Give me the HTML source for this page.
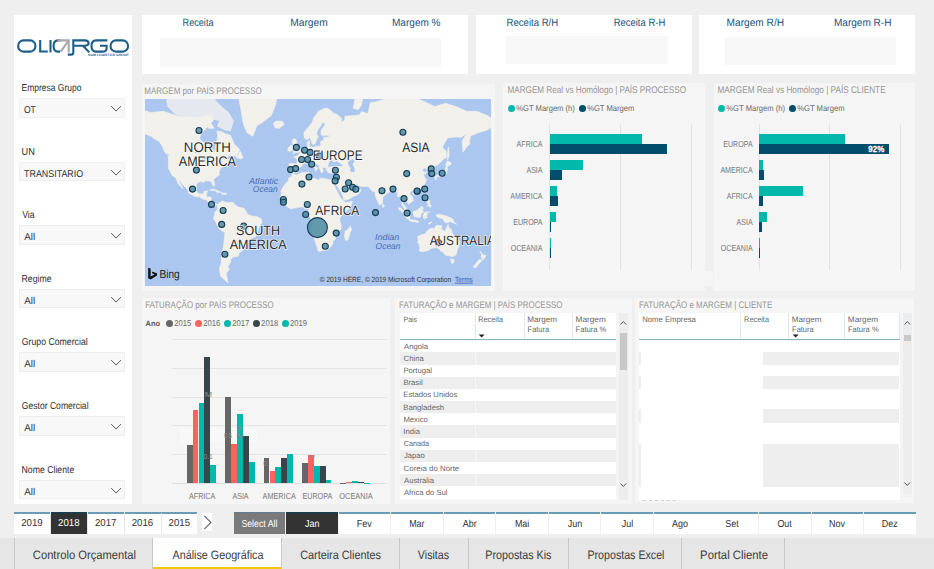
<!DOCTYPE html>
<html><head><meta charset="utf-8"><title>Análise Geográfica</title>
<style>
html,body{margin:0;padding:0}
body{width:934px;height:569px;overflow:hidden;position:relative;background:#efefef;font-family:"Liberation Sans", sans-serif;text-rendering:geometricPrecision}
.b{position:absolute}
.t{position:absolute;white-space:nowrap;line-height:1;transform-origin:0 0}
</style></head><body>
<div class="b" style="left:14.00px;top:15.00px;width:118.00px;height:489.00px;background:#fff;"></div>
<svg class="b" style="left:15px;top:36px" width="118" height="24" viewBox="15 36 118 24">
<g fill="none" stroke="#1d5f8b" stroke-width="2.1" stroke-linecap="butt">
<rect x="18.2" y="40.4" width="17.2" height="11.2" rx="5.2"/>
<path d="M40.2 40 V51.5 H47.8"/>
<path d="M50.5 40 V52.4"/>
<path d="M60.5 40.4 H58 Q53.6 40.4 53.6 46 Q53.6 51.6 58 51.6 H60"/>
<path d="M67.8 54.6 H71 Q73.3 54.6 73.3 52.4 V40.4 H84.5 Q88.6 40.4 88.6 43.3 Q88.6 45.7 84.5 45.7 H74 M83 45.7 L89.3 52.4"/>
<path d="M107.4 40.4 H96 Q91.5 40.4 91.5 46 Q91.5 51.6 96 51.6 H102.5 Q106.6 51.6 106.6 48.5 V45.7 H100"/>
<rect x="110.6" y="40.4" width="17.4" height="11.2" rx="5.2"/>
</g>
<g fill="none" stroke="#a9a9a9" stroke-width="2.1"><path d="M57.5 40.4 H68.7 V52.4 M68.4 40.8 L60.5 51.8"/></g>
<text x="88" y="56.3" font-size="3.4" fill="#1d5f8b" font-family="Liberation Sans" font-weight="bold" textLength="40.5" lengthAdjust="spacingAndGlyphs">SGM LOGISTICS GROUP</text>
</svg>
<div class="b" style="left:19.30px;top:98.00px;width:106.20px;height:19.60px;background:#f8f8f8;box-sizing:border-box;border:1px solid #eeeeee;"></div>
<svg class="b" style="left:110px;top:104.0px" width="13" height="9"><path d="M1.2 2.2 L6.1 7 L11 2.2" fill="none" stroke="#555" stroke-width="1"/></svg>
<div class="b" style="left:19.30px;top:161.60px;width:106.20px;height:19.60px;background:#f8f8f8;box-sizing:border-box;border:1px solid #eeeeee;"></div>
<svg class="b" style="left:110px;top:167.6px" width="13" height="9"><path d="M1.2 2.2 L6.1 7 L11 2.2" fill="none" stroke="#555" stroke-width="1"/></svg>
<div class="b" style="left:19.30px;top:225.20px;width:106.20px;height:19.60px;background:#f8f8f8;box-sizing:border-box;border:1px solid #eeeeee;"></div>
<svg class="b" style="left:110px;top:231.2px" width="13" height="9"><path d="M1.2 2.2 L6.1 7 L11 2.2" fill="none" stroke="#555" stroke-width="1"/></svg>
<div class="b" style="left:19.30px;top:288.80px;width:106.20px;height:19.60px;background:#f8f8f8;box-sizing:border-box;border:1px solid #eeeeee;"></div>
<svg class="b" style="left:110px;top:294.8px" width="13" height="9"><path d="M1.2 2.2 L6.1 7 L11 2.2" fill="none" stroke="#555" stroke-width="1"/></svg>
<div class="b" style="left:19.30px;top:352.40px;width:106.20px;height:19.60px;background:#f8f8f8;box-sizing:border-box;border:1px solid #eeeeee;"></div>
<svg class="b" style="left:110px;top:358.4px" width="13" height="9"><path d="M1.2 2.2 L6.1 7 L11 2.2" fill="none" stroke="#555" stroke-width="1"/></svg>
<div class="b" style="left:19.30px;top:416.00px;width:106.20px;height:19.60px;background:#f8f8f8;box-sizing:border-box;border:1px solid #eeeeee;"></div>
<svg class="b" style="left:110px;top:422.0px" width="13" height="9"><path d="M1.2 2.2 L6.1 7 L11 2.2" fill="none" stroke="#555" stroke-width="1"/></svg>
<div class="b" style="left:19.30px;top:479.60px;width:106.20px;height:19.60px;background:#f8f8f8;box-sizing:border-box;border:1px solid #eeeeee;"></div>
<svg class="b" style="left:110px;top:485.6px" width="13" height="9"><path d="M1.2 2.2 L6.1 7 L11 2.2" fill="none" stroke="#555" stroke-width="1"/></svg>
<div class="b" style="left:142.00px;top:15.00px;width:326.00px;height:59.00px;background:#fff;"></div>
<div class="b" style="left:160.00px;top:38.00px;width:281.00px;height:29.00px;background:#f8f8f8;"></div>
<div class="b" style="left:476.00px;top:15.00px;width:215.50px;height:59.00px;background:#fff;"></div>
<div class="b" style="left:506.00px;top:36.00px;width:162.00px;height:28.00px;background:#f8f8f8;"></div>
<div class="b" style="left:699.00px;top:15.00px;width:215.50px;height:59.00px;background:#fff;"></div>
<div class="b" style="left:725.00px;top:36.50px;width:171.00px;height:28.00px;background:#f8f8f8;"></div>
<div class="b" style="left:142.00px;top:84.00px;width:353.00px;height:207.00px;background:#f5f5f5;"></div>
<svg class="b" style="left:145px;top:99px" width="346" height="187" viewBox="0 0 346 187">
<rect width="346" height="187" fill="#abc7f0"/>
<path d="M22.5 -9.0L22.5 7.6L29.8 15.2L48.7 19.4L61.3 18.0L68.6 20.7L74.9 22.0L85.6 32.2L88.7 21.7L83.3 12.9L79.1 9.8L73.9 5.0L69.7 0.0L71.8 -9.0Z" fill="#e5e8ee"/><path d="M88.7 21.7L85.6 32.2L79.1 30.9L71.8 27.0L76.0 18.8L69.2 13.2L63.4 11.4L59.7 0.8L69.7 0.0L73.9 5.0L79.1 9.8L83.3 12.9Z" fill="#e5e8ee"/><path d="M29.8 15.2L35.1 16.6L42.4 15.8L47.7 13.8L46.6 4.3L42.4 0.8L35.1 0.8L29.8 4.3L28.8 9.2Z" fill="#e5e8ee"/><path d="M22.5 7.6L26.7 9.2L31.9 4.3L30.9 -4.9L23.5 -4.9L21.4 2.6Z" fill="#e5e8ee"/>
<g fill="#f2f0ea" stroke="#f2f0ea" stroke-width="0.6" stroke-linejoin="round"><path d="M-22.6 24.3L-20.5 15.5L-10.9 8.3L5.7 13.5L18.3 12.3L30.9 16.6L40.3 17.5L51.8 18.6L53.9 18.0L61.3 16.6L67.6 16.6L65.5 13.8L68.1 22.0L62.3 28.1L56.0 34.8L54.5 39.3L57.1 42.8L64.4 45.9L67.4 50.1L70.2 52.5L70.7 47.4L72.8 36.9L71.8 32.0L77.0 32.7L80.2 34.8L85.4 36.3L89.1 44.7L94.9 50.8L91.7 57.3L84.4 56.5L79.1 59.9L85.9 60.3L89.6 61.8L84.4 64.7L80.2 64.7L80.2 67.2L76.0 68.8L73.9 73.4L74.4 75.7L68.6 80.3L69.7 85.6L69.2 87.6L67.8 86.2L66.7 83.8L65.5 82.1L59.7 81.8L59.2 83.3L55.0 82.6L51.5 84.7L51.3 89.0L51.0 91.2L53.4 94.7L58.1 95.1L58.7 94.0L58.9 92.3L62.3 91.8L61.8 95.1L61.1 97.8L65.5 98.0L66.3 98.9L65.8 103.0L68.1 105.1L70.2 104.6L72.5 105.6L70.2 106.7L69.2 106.9L66.5 105.8L63.7 104.1L61.8 100.9L57.6 99.9L54.5 97.8L52.4 98.1L47.7 96.5L42.9 93.4L43.2 91.8L41.4 89.0L38.7 87.0L35.9 82.9L33.2 79.9L35.1 83.8L38.2 90.1L36.1 88.1L33.0 84.4L31.2 80.3L30.7 78.8L27.1 76.6L25.1 72.4L23.3 69.1L23.5 60.8L22.8 57.4L24.6 56.5L19.9 53.6L17.2 47.0L13.6 41.9L9.4 39.9L6.2 37.3L0.4 35.2L-5.3 38.5L-7.9 41.9L-12.1 42.2L-16.3 45.6L-19.0 47.4L-11.1 39.3L-16.3 37.9L-20.0 33.8L-19.3 30.2L-15.3 27.0L-20.3 26.7Z"/><path d="M107.4 37.3L102.2 33.8L99.1 27.0L97.5 20.7L95.9 10.8L93.3 -3.0L84.4 -11.2L77.0 -20.7L90.7 -42.1L111.6 -54.4L132.6 -42.1L134.7 -13.4L130.5 6.0L126.3 16.6L116.9 23.8L111.6 27.0L108.5 35.9Z"/><path d="M128.4 24.5L130.5 22.3L136.8 22.0L139.4 25.3L134.0 29.5L129.8 28.6Z"/><path d="M63.4 29.3L69.2 29.3L66.5 25.0L62.9 23.3Z"/><path d="M91.4 58.7L95.4 52.3L98.0 58.8L95.4 59.9Z"/><path d="M64.4 91.3L67.6 89.9L72.3 91.5L75.8 93.2L72.3 93.5L69.7 91.5L65.5 91.5Z"/><path d="M75.6 93.6L81.8 94.5L81.4 95.4L77.5 95.4Z"/><path d="M72.5 105.6L74.4 103.6L78.1 101.8L78.8 103.0L83.3 103.5L88.6 103.6L89.6 105.6L93.8 108.2L99.1 109.3L101.2 112.6L102.7 115.4L106.9 117.0L111.6 117.4L116.7 120.1L116.9 123.7L114.3 127.3L112.7 132.7L110.9 137.6L106.9 138.9L102.7 142.1L102.4 145.0L98.0 151.0L93.8 154.3L93.3 157.3L88.6 158.0L85.4 160.6L85.9 162.7L82.8 167.7L84.4 170.0L81.2 174.7L82.0 178.0L83.0 183.9L75.4 177.1L74.4 169.2L76.3 163.4L76.5 155.4L78.6 146.7L79.9 133.7L74.4 130.0L72.8 127.3L70.2 122.1L68.4 119.5L69.7 115.4L69.7 113.4L71.3 111.8L72.5 110.3L72.3 107.2Z"/><path d="M147.4 75.0L151.5 75.9L156.7 73.7L164.1 73.1L165.1 76.0L164.6 77.8L169.6 79.4L174.4 81.5L174.6 79.6L177.7 79.0L184.5 80.9L187.5 80.5L187.8 82.2L188.7 85.0L190.8 89.6L192.4 92.9L194.0 95.6L195.2 98.3L199.0 102.5L200.8 103.7L205.0 102.7L207.4 102.2L207.1 103.7L206.1 106.7L202.4 111.3L197.1 115.9L194.8 119.5L195.0 122.6L196.1 125.2L196.1 130.0L190.3 135.4L190.8 139.8L188.0 142.1L187.7 145.3L185.1 148.5L182.4 151.0L177.2 151.6L174.6 152.6L172.9 151.8L172.5 149.1L170.9 145.1L168.8 138.1L166.0 132.1L167.9 126.3L166.4 120.6L163.0 115.4L163.6 110.5L162.5 109.8L159.9 110.0L158.3 107.9L154.6 108.2L149.4 109.1L145.7 109.9L141.5 107.3L139.6 105.1L137.9 103.0L136.0 101.5L135.2 99.1L136.5 94.0L135.8 92.3L137.9 88.4L140.0 85.0L143.3 82.1L143.6 79.1L146.5 77.2Z"/><path d="M205.3 126.8L206.6 130.5L205.5 132.7L203.0 140.7L200.8 141.5L199.4 138.1L200.2 132.1L202.4 130.8L204.5 128.4Z"/><path d="M147.7 74.7L146.8 73.6L145.7 73.2L144.2 73.4L144.4 71.2L143.6 70.2L144.4 66.8L143.8 65.1L145.2 64.4L149.4 64.8L151.7 64.8L152.3 60.8L151.0 59.1L148.7 58.1L152.0 57.0L153.6 55.7L155.3 53.6L157.8 52.5L158.6 50.0L160.9 49.1L162.6 48.4L162.1 45.6L162.2 43.2L164.7 41.5L164.4 44.1L163.9 46.5L165.0 47.7L166.2 47.9L168.5 48.4L171.4 47.0L174.2 47.5L175.8 45.9L175.6 42.8L177.3 41.5L179.2 42.2L178.3 38.7L183.0 37.9L185.4 37.1L184.0 36.5L180.3 36.3L177.5 37.1L176.0 35.2L176.3 30.9L180.1 25.8L179.3 23.8L177.1 23.8L175.8 27.0L173.5 29.8L172.0 32.7L171.7 35.5L173.3 37.5L171.0 42.0L170.3 44.5L168.6 45.6L167.0 44.7L166.0 40.9L164.8 38.3L162.2 40.7L159.5 39.3L158.8 33.8L160.9 30.7L164.6 27.0L167.2 23.3L168.8 18.6L171.4 15.2L173.5 12.3L178.3 9.8L182.4 8.9L186.1 11.7L188.7 14.4L191.9 15.2L196.6 19.4L196.1 23.3L199.8 21.2L200.0 17.2L209.2 16.6L214.4 15.8L216.5 12.6L222.8 14.6L225.5 3.3L229.1 3.3L237.5 0.8L244.9 -1.1L258.5 -13.4L271.1 -1.1L290.0 7.6L300.5 4.3L311.0 7.6L321.4 12.3L331.9 12.3L342.4 16.6L352.9 23.3L348.7 27.0L341.4 31.6L335.1 33.1L325.6 36.9L324.6 41.9L325.1 44.7L321.4 48.3L318.0 53.3L317.2 41.9L321.4 34.8L316.2 38.3L311.0 37.9L302.6 38.9L297.3 48.3L301.0 51.7L301.7 58.1L298.4 60.3L293.1 65.7L290.7 66.4L289.4 68.2L289.4 74.1L289.2 75.7L286.3 76.7L286.1 73.4L284.5 69.8L281.1 71.0L280.7 68.3L277.4 70.7L279.0 73.2L282.1 72.9L278.6 76.0L280.3 79.7L281.5 81.1L279.1 86.7L276.9 89.6L272.7 91.0L269.0 92.9L267.4 91.6L265.3 93.2L264.6 94.7L267.7 98.3L268.2 102.0L265.8 103.6L263.5 105.5L263.7 104.1L262.2 103.6L261.1 101.8L259.3 100.4L258.5 101.8L257.7 104.1L258.7 105.9L260.1 107.4L262.1 109.7L262.9 113.0L262.0 113.1L259.9 111.5L258.8 108.4L256.8 105.8L257.0 101.5L256.1 97.2L252.4 97.8L252.7 94.0L250.4 92.1L248.3 91.2L246.4 91.6L244.8 92.9L242.3 94.3L237.8 98.3L237.7 100.9L237.3 103.8L234.9 106.1L233.6 104.6L232.1 101.1L230.6 97.8L230.0 94.5L229.8 92.0L227.6 92.6L226.0 90.7L224.4 89.0L223.5 87.4L218.1 87.6L213.7 87.0L212.9 85.4L210.8 86.0L207.6 84.5L206.2 82.0L204.0 82.7L204.5 85.0L206.2 86.5L207.7 88.4L210.6 88.7L212.7 87.1L212.8 89.0L216.3 90.7L214.2 94.5L211.8 96.1L208.4 97.5L204.5 99.9L200.8 101.1L199.1 101.2L198.3 98.3L196.4 93.6L194.4 90.7L191.9 86.7L190.3 84.3L190.2 82.7L187.8 82.2L187.5 80.5L189.8 80.3L191.2 76.6L191.4 73.7L187.7 74.6L185.6 74.0L183.0 73.7L181.1 70.2L181.4 68.8L178.8 68.4L177.5 68.8L178.3 72.2L176.7 74.1L175.6 72.2L174.1 68.8L173.8 66.1L170.4 64.7L168.0 61.8L166.5 62.0L168.1 64.7L170.3 66.9L173.0 69.4L171.5 70.8L170.4 72.2L170.1 69.5L168.4 68.4L166.2 66.9L164.6 65.4L162.8 63.4L161.5 64.3L158.3 64.8L156.9 66.1L157.0 66.9L154.5 68.2L153.3 70.2L153.8 71.2L152.9 72.7L151.4 73.8L148.9 73.8Z"/><path d="M147.6 54.8L150.5 53.8L155.1 53.0L155.4 50.5L153.9 49.1L152.0 45.6L151.5 41.7L150.1 39.7L148.4 39.7L147.1 41.9L147.6 44.7L148.5 46.8L150.5 48.3L150.5 49.5L148.7 50.3L149.4 51.7L148.1 52.2L150.5 52.7L148.9 53.2Z"/><path d="M147.3 51.3L147.3 48.3L147.8 47.2L145.9 45.9L144.7 47.4L143.1 49.1L142.8 52.0L144.7 52.3Z"/><path d="M290.9 80.9L291.9 77.6L295.2 77.6L297.1 76.9L300.3 76.0L301.3 74.7L302.0 71.5L302.5 69.5L301.9 67.6L301.5 67.1L300.5 66.4L302.1 62.0L306.0 63.5L306.2 65.0L303.9 66.8L301.5 67.5L300.5 68.8L300.3 72.2L297.3 73.4L295.7 75.4L291.4 76.6L289.8 78.2L290.2 80.5Z"/><path d="M302.6 61.1L304.1 56.5L303.6 48.3L302.9 49.1L302.6 54.9L302.3 60.3Z"/><path d="M279.6 90.1L280.4 91.3L281.5 88.4L281.1 87.5Z"/><path d="M267.5 94.3L269.5 93.3L270.0 94.0L268.5 95.4Z"/><path d="M279.5 95.1L281.9 95.1L281.6 97.2L283.7 100.9L280.5 100.1L280.0 98.8Z"/><path d="M281.6 107.2L284.7 104.3L286.3 106.9L285.2 108.5L283.2 106.4Z"/><path d="M281.6 102.2L285.2 101.5L284.7 104.1L282.6 104.6Z"/><path d="M237.4 104.3L239.5 106.7L238.6 108.2L237.5 107.7Z"/><path d="M253.6 108.6L255.9 109.1L258.9 112.0L263.2 116.2L264.8 117.7L264.6 120.4L263.2 120.5L260.9 118.5L258.9 115.4L257.1 112.7L253.8 110.3Z"/><path d="M264.0 121.4L264.8 120.5L267.2 120.9L270.0 121.1L271.8 121.5L273.7 122.4L273.6 123.4L270.0 122.9L266.9 122.4L264.2 121.6Z"/><path d="M267.9 112.9L268.7 115.4L269.2 117.4L270.8 117.9L273.7 118.5L275.5 118.1L275.8 115.4L277.2 113.4L278.4 113.4L277.4 109.8L278.6 109.1L276.3 107.2L275.3 108.5L274.2 109.5L272.7 110.8L270.6 111.8L268.6 112.3Z"/><path d="M278.2 117.1L279.0 113.7L280.0 113.2L284.6 112.9L280.8 113.9L282.9 115.3L281.1 116.4L282.4 119.0L280.5 119.0L279.9 117.0L279.8 120.2L278.9 120.0Z"/><path d="M291.0 115.9L294.2 115.2L297.3 115.9L301.5 117.1L306.5 119.3L308.3 120.6L308.6 122.6L311.7 125.2L306.8 123.2L304.7 122.3L303.6 123.7L301.5 123.8L299.4 122.7L298.2 120.0L295.2 118.9L292.9 118.5L291.3 117.0Z"/><path d="M283.7 124.0L287.0 123.1L284.7 124.9L283.2 125.0Z"/><path d="M272.7 137.6L273.4 137.3L276.0 136.0L280.5 134.8L281.9 132.1L284.7 130.0L287.3 128.9L289.6 130.0L290.2 127.3L292.7 126.3L296.9 126.8L296.1 129.8L299.9 132.7L302.1 127.4L303.1 125.5L304.1 128.9L306.1 130.0L307.1 134.3L310.1 137.0L314.2 141.5L314.7 145.1L312.3 151.3L311.0 156.0L307.1 158.0L305.2 156.9L301.1 156.6L298.0 153.8L298.4 152.1L296.1 152.6L294.4 150.1L291.0 148.5L285.8 149.5L283.3 151.4L277.4 152.8L274.2 151.9L275.0 148.8L274.1 145.5L272.3 142.3L273.4 142.4Z"/><path d="M305.4 160.2L309.2 160.5L308.7 163.7L306.8 164.3Z"/><path d="M334.8 152.1L336.7 154.1L338.1 155.9L340.8 156.3L340.2 158.2L339.1 159.3L337.4 161.5L336.9 158.9L335.9 158.2L336.7 155.4Z"/><path d="M334.8 160.0L336.4 161.6L335.3 163.4L333.2 165.5L331.2 168.6L328.3 168.0L330.4 164.8L333.0 162.0Z"/><path d="M208.1 9.2L213.4 10.8L216.5 6.0L218.6 -4.9L222.8 -13.4L214.4 -9.0L210.2 -1.1Z"/><path d="M165.1 -18.2L171.4 -11.2L179.8 -13.4L181.9 -29.0L172.5 -32.0L165.1 -26.1Z"/></g>
<path d="M183.0 67.9L190.3 66.8L197.1 67.5L197.4 66.1L193.5 63.3L191.9 62.1L188.7 63.3L186.1 60.3L185.1 61.8L183.8 64.0ZM202.9 63.0L207.6 59.7L209.7 62.5L207.4 65.4L209.2 68.2L210.0 72.8L206.6 73.2L205.0 71.8L205.5 69.1L202.9 65.0ZM57.0 60.0L61.3 56.7L64.6 58.8L64.9 60.3L61.8 60.3L58.7 60.2ZM61.5 67.2L62.3 61.4L64.4 61.1L63.9 64.0L62.9 66.8ZM65.0 61.4L68.1 60.8L69.7 62.5L67.9 65.1L67.1 65.4L66.0 64.0ZM66.1 67.2L68.6 66.4L70.7 65.7L68.6 67.3ZM69.9 65.0L73.7 64.7L73.4 63.7L70.7 64.1ZM49.7 54.1L52.4 48.8L52.6 54.1ZM262.7 52.2L268.5 45.6L269.0 46.5L264.3 52.8Z" fill="#abc7f0"/>
<g fill="#4a8aa2" fill-opacity="0.85" stroke="#173d55" stroke-width="1.1"><circle cx="54.0" cy="31.5" r="3.0"/><circle cx="51.4" cy="71.1" r="3.0"/><circle cx="47.5" cy="90.1" r="3.0"/><circle cx="66.5" cy="105.4" r="3.0"/><circle cx="78.1" cy="111.5" r="3.0"/><circle cx="76.7" cy="125.4" r="3.0"/><circle cx="98.7" cy="127.0" r="3.0"/><circle cx="79.9" cy="155.3" r="3.0"/><circle cx="151.4" cy="48.4" r="3.0"/><circle cx="159.6" cy="51.3" r="3.0"/><circle cx="165.1" cy="53.4" r="3.0"/><circle cx="174.2" cy="57.1" r="3.0"/><circle cx="156.6" cy="60.5" r="3.0"/><circle cx="162.6" cy="60.5" r="3.0"/><circle cx="166.7" cy="65.3" r="3.0"/><circle cx="145.6" cy="70.6" r="3.0"/><circle cx="150.6" cy="69.6" r="3.0"/><circle cx="164.0" cy="78.0" r="3.0"/><circle cx="156.9" cy="85.1" r="3.0"/><circle cx="190.4" cy="71.3" r="3.0"/><circle cx="191.4" cy="78.2" r="3.0"/><circle cx="190.1" cy="81.9" r="3.0"/><circle cx="203.6" cy="83.7" r="3.0"/><circle cx="200.2" cy="90.0" r="3.0"/><circle cx="207.6" cy="88.2" r="3.0"/><circle cx="210.8" cy="90.3" r="3.0"/><circle cx="138.4" cy="100.5" r="3.0"/><circle cx="138.4" cy="103.3" r="3.0"/><circle cx="162.3" cy="105.5" r="3.0"/><circle cx="160.7" cy="115.5" r="3.0"/><circle cx="172.4" cy="128.6" r="10"/><circle cx="191.2" cy="134.1" r="3.0"/><circle cx="180.3" cy="147.2" r="3.0"/><circle cx="257.9" cy="33.3" r="3.0"/><circle cx="261.7" cy="74.6" r="3.0"/><circle cx="286.2" cy="69.9" r="3.0"/><circle cx="286.7" cy="74.6" r="3.0"/><circle cx="297.2" cy="74.3" r="3.0"/><circle cx="237.0" cy="91.7" r="3.0"/><circle cx="248.0" cy="90.1" r="3.0"/><circle cx="272.3" cy="92.2" r="3.0"/><circle cx="272.0" cy="92.0" r="3.0"/><circle cx="279.7" cy="90.1" r="3.0"/><circle cx="259.0" cy="99.6" r="3.0"/><circle cx="280.0" cy="98.7" r="3.0"/><circle cx="230.5" cy="113.6" r="3.0"/><circle cx="262.1" cy="114.1" r="3.0"/><circle cx="293.4" cy="143.6" r="3.0"/></g>
</svg>
<svg class="b" style="left:147px;top:267px" width="12" height="15"><path d="M1.2 0.8 L3.6 1.6 V9.6 L7.6 7.4 L5.4 6.4 L4.6 4.4 L10 6.3 V8.6 L3.6 12.6 L1.2 11.2 Z" fill="#111"/></svg>
<div class="b" style="left:503.40px;top:83.00px;width:201.90px;height:208.00px;background:#f5f5f5;"></div>
<div class="b" style="left:508.2px;top:104.6px;width:7px;height:7px;border-radius:50%;background:#01b8aa"></div>
<div class="b" style="left:578.6px;top:104.6px;width:7px;height:7px;border-radius:50%;background:#014d6b"></div>
<div class="b" style="left:549.00px;top:123.50px;width:1.00px;height:146.50px;background:#e3e3e3;"></div>
<div class="b" style="left:619.80px;top:123.50px;width:1.00px;height:146.50px;background:#e3e3e3;"></div>
<div class="b" style="left:690.80px;top:123.50px;width:1.00px;height:146.50px;background:#e3e3e3;"></div>
<div class="b" style="left:549.50px;top:133.90px;width:92.20px;height:10.30px;background:#01b8aa;"></div>
<div class="b" style="left:549.50px;top:144.20px;width:117.90px;height:9.70px;background:#014d6b;"></div>
<div class="b" style="left:549.50px;top:159.90px;width:33.20px;height:10.30px;background:#01b8aa;"></div>
<div class="b" style="left:549.50px;top:170.20px;width:12.40px;height:9.70px;background:#014d6b;"></div>
<div class="b" style="left:549.50px;top:185.90px;width:7.10px;height:10.30px;background:#01b8aa;"></div>
<div class="b" style="left:549.50px;top:196.20px;width:8.30px;height:9.70px;background:#014d6b;"></div>
<div class="b" style="left:549.50px;top:211.90px;width:6.40px;height:10.30px;background:#01b8aa;"></div>
<div class="b" style="left:549.50px;top:222.20px;width:1.50px;height:9.70px;background:#014d6b;"></div>
<div class="b" style="left:549.50px;top:237.90px;width:1.50px;height:10.30px;background:#01b8aa;"></div>
<div class="b" style="left:549.50px;top:248.20px;width:0.80px;height:9.70px;background:#014d6b;"></div>
<div class="b" style="left:713.50px;top:83.00px;width:201.20px;height:208.00px;background:#f5f5f5;"></div>
<div class="b" style="left:718.3px;top:104.6px;width:7px;height:7px;border-radius:50%;background:#01b8aa"></div>
<div class="b" style="left:788.7px;top:104.6px;width:7px;height:7px;border-radius:50%;background:#014d6b"></div>
<div class="b" style="left:758.80px;top:123.50px;width:1.00px;height:146.50px;background:#e3e3e3;"></div>
<div class="b" style="left:829.30px;top:123.50px;width:1.00px;height:146.50px;background:#e3e3e3;"></div>
<div class="b" style="left:900.30px;top:123.50px;width:1.00px;height:146.50px;background:#e3e3e3;"></div>
<div class="b" style="left:759.30px;top:133.90px;width:85.50px;height:10.30px;background:#01b8aa;"></div>
<div class="b" style="left:759.30px;top:144.20px;width:130.10px;height:9.70px;background:#014d6b;"></div>
<div class="b" style="left:759.30px;top:159.90px;width:3.50px;height:10.30px;background:#01b8aa;"></div>
<div class="b" style="left:759.30px;top:170.20px;width:4.30px;height:9.70px;background:#014d6b;"></div>
<div class="b" style="left:759.30px;top:185.90px;width:43.60px;height:10.30px;background:#01b8aa;"></div>
<div class="b" style="left:759.30px;top:196.20px;width:3.50px;height:9.70px;background:#014d6b;"></div>
<div class="b" style="left:759.30px;top:211.90px;width:7.30px;height:10.30px;background:#01b8aa;"></div>
<div class="b" style="left:759.30px;top:222.20px;width:2.40px;height:9.70px;background:#014d6b;"></div>
<div class="b" style="left:759.30px;top:237.90px;width:1.20px;height:10.30px;background:#01b8aa;"></div>
<div class="b" style="left:759.30px;top:248.20px;width:0.80px;height:9.70px;background:#014d6b;"></div>
<div class="b" style="left:705.30px;top:270.80px;width:8.20px;height:15.50px;background:#f5f5f5;"></div>
<div class="b" style="left:142.00px;top:297.80px;width:248.00px;height:206.20px;background:#f5f5f5;"></div>
<div class="b" style="left:165.90px;top:319.8px;width:7.2px;height:7.2px;border-radius:50%;background:#666666"></div>
<div class="b" style="left:194.83px;top:319.8px;width:7.2px;height:7.2px;border-radius:50%;background:#fd625e"></div>
<div class="b" style="left:223.76px;top:319.8px;width:7.2px;height:7.2px;border-radius:50%;background:#01b8aa"></div>
<div class="b" style="left:252.69px;top:319.8px;width:7.2px;height:7.2px;border-radius:50%;background:#374649"></div>
<div class="b" style="left:281.62px;top:319.8px;width:7.2px;height:7.2px;border-radius:50%;background:#01b8aa"></div>
<div class="b" style="left:171.60px;top:339.00px;width:215.20px;height:1.00px;background:#e5e5e5;"></div>
<div class="b" style="left:171.60px;top:367.80px;width:215.20px;height:1.00px;background:#e5e5e5;"></div>
<div class="b" style="left:171.60px;top:396.60px;width:215.20px;height:1.00px;background:#e5e5e5;"></div>
<div class="b" style="left:171.60px;top:425.40px;width:215.20px;height:1.00px;background:#e5e5e5;"></div>
<div class="b" style="left:171.60px;top:454.20px;width:215.20px;height:1.00px;background:#e5e5e5;"></div>
<div class="b" style="left:171.60px;top:483.00px;width:215.20px;height:1.00px;background:#dedede;"></div>
<div class="b" style="left:180.00px;top:427.50px;width:77.00px;height:14.00px;background:rgba(255,255,255,0.35);"></div>
<div class="b" style="left:186.70px;top:445.30px;width:5.90px;height:38.00px;background:#666666;"></div>
<div class="b" style="left:192.60px;top:409.80px;width:5.90px;height:73.50px;background:#fd625e;"></div>
<div class="b" style="left:198.50px;top:402.80px;width:5.90px;height:80.50px;background:#01b8aa;"></div>
<div class="b" style="left:204.40px;top:356.50px;width:5.90px;height:126.80px;background:#374649;"></div>
<div class="b" style="left:210.30px;top:464.60px;width:5.90px;height:18.70px;background:#01b8aa;"></div>
<div class="b" style="left:225.10px;top:397.00px;width:5.90px;height:86.30px;background:#666666;"></div>
<div class="b" style="left:231.00px;top:443.80px;width:5.90px;height:39.50px;background:#fd625e;"></div>
<div class="b" style="left:236.90px;top:413.60px;width:5.90px;height:69.70px;background:#01b8aa;"></div>
<div class="b" style="left:242.80px;top:436.00px;width:5.90px;height:47.30px;background:#374649;"></div>
<div class="b" style="left:248.70px;top:462.00px;width:5.90px;height:21.30px;background:#01b8aa;"></div>
<div class="b" style="left:263.60px;top:458.00px;width:5.90px;height:25.30px;background:#666666;"></div>
<div class="b" style="left:269.50px;top:470.80px;width:5.90px;height:12.50px;background:#fd625e;"></div>
<div class="b" style="left:275.40px;top:467.00px;width:5.90px;height:16.30px;background:#01b8aa;"></div>
<div class="b" style="left:281.30px;top:458.00px;width:5.90px;height:25.30px;background:#374649;"></div>
<div class="b" style="left:287.20px;top:454.20px;width:5.90px;height:29.10px;background:#01b8aa;"></div>
<div class="b" style="left:302.00px;top:462.70px;width:5.90px;height:20.60px;background:#666666;"></div>
<div class="b" style="left:307.90px;top:455.40px;width:5.90px;height:27.90px;background:#fd625e;"></div>
<div class="b" style="left:313.80px;top:465.80px;width:5.90px;height:17.50px;background:#01b8aa;"></div>
<div class="b" style="left:319.70px;top:466.20px;width:5.90px;height:17.10px;background:#374649;"></div>
<div class="b" style="left:325.60px;top:479.70px;width:5.90px;height:3.60px;background:#01b8aa;"></div>
<div class="b" style="left:340.40px;top:482.60px;width:5.90px;height:0.70px;background:#666666;"></div>
<div class="b" style="left:346.30px;top:482.00px;width:5.90px;height:1.30px;background:#fd625e;"></div>
<div class="b" style="left:352.20px;top:480.80px;width:5.90px;height:2.50px;background:#01b8aa;"></div>
<div class="b" style="left:358.10px;top:481.60px;width:5.90px;height:1.70px;background:#374649;"></div>
<div class="b" style="left:364.00px;top:482.50px;width:5.90px;height:0.80px;background:#01b8aa;"></div>
<div class="b" style="left:395.30px;top:297.80px;width:236.70px;height:206.20px;background:#f5f5f5;"></div>
<div class="b" style="left:400.00px;top:313.30px;width:216.00px;height:25.70px;background:#fff;"></div>
<div class="b" style="left:400.00px;top:338.80px;width:216.00px;height:1.40px;background:#8fb3c6;"></div>
<div class="b" style="left:475.10px;top:313.30px;width:1.00px;height:25.50px;background:#dfe8ee;"></div>
<div class="b" style="left:524.00px;top:313.30px;width:1.00px;height:25.50px;background:#dfe8ee;"></div>
<div class="b" style="left:571.90px;top:313.30px;width:1.00px;height:25.50px;background:#dfe8ee;"></div>
<svg class="b" style="left:478px;top:333.5px" width="8" height="5"><path d="M0.6 0.5 H6.6 L3.6 3.6 Z" fill="#222"/></svg>
<div class="b" style="left:400.00px;top:340.20px;width:216.00px;height:12.18px;background:#fff;"></div>
<div class="b" style="left:400.00px;top:352.38px;width:216.00px;height:12.18px;background:#eeeeee;"></div>
<div class="b" style="left:400.00px;top:364.56px;width:216.00px;height:12.18px;background:#fff;"></div>
<div class="b" style="left:400.00px;top:376.74px;width:216.00px;height:12.18px;background:#eeeeee;"></div>
<div class="b" style="left:400.00px;top:388.92px;width:216.00px;height:12.18px;background:#fff;"></div>
<div class="b" style="left:400.00px;top:401.10px;width:216.00px;height:12.18px;background:#eeeeee;"></div>
<div class="b" style="left:400.00px;top:413.28px;width:216.00px;height:12.18px;background:#fff;"></div>
<div class="b" style="left:400.00px;top:425.46px;width:216.00px;height:12.18px;background:#eeeeee;"></div>
<div class="b" style="left:400.00px;top:437.64px;width:216.00px;height:12.18px;background:#fff;"></div>
<div class="b" style="left:400.00px;top:449.82px;width:216.00px;height:12.18px;background:#eeeeee;"></div>
<div class="b" style="left:400.00px;top:462.00px;width:216.00px;height:12.18px;background:#fff;"></div>
<div class="b" style="left:400.00px;top:474.18px;width:216.00px;height:12.18px;background:#eeeeee;"></div>
<div class="b" style="left:400.00px;top:486.36px;width:216.00px;height:12.18px;background:#fff;"></div>
<div class="b" style="left:475.10px;top:340.20px;width:1.00px;height:158.30px;background:rgba(255,255,255,0.6);"></div>
<div class="b" style="left:616.00px;top:313.30px;width:14.00px;height:185.70px;background:#f4f4f4;"></div>
<div class="b" style="left:619.30px;top:313.30px;width:8.40px;height:187.20px;background:#ededed;"></div>
<div class="b" style="left:620.40px;top:333.30px;width:6.20px;height:37.10px;background:#c8c8c8;"></div>
<svg class="b" style="left:619px;top:320px" width="9" height="6"><path d="M1.5 4.5 L4.3 1.5 L7.1 4.5" fill="none" stroke="#555" stroke-width="1"/></svg>
<svg class="b" style="left:619px;top:482px" width="9" height="6"><path d="M1.5 1.5 L4.3 4.5 L7.1 1.5" fill="none" stroke="#555" stroke-width="1"/></svg>
<div class="b" style="left:635.00px;top:297.80px;width:279.20px;height:205.60px;background:#f5f5f5;"></div>
<div class="b" style="left:639.00px;top:313.30px;width:260.50px;height:187.20px;background:#fff;"></div>
<div class="b" style="left:639.00px;top:338.80px;width:260.50px;height:1.40px;background:#8fb3c6;"></div>
<div class="b" style="left:740.10px;top:313.30px;width:1.00px;height:25.50px;background:#dfe8ee;"></div>
<div class="b" style="left:788.00px;top:313.30px;width:1.00px;height:25.50px;background:#dfe8ee;"></div>
<div class="b" style="left:844.10px;top:313.30px;width:1.00px;height:25.50px;background:#dfe8ee;"></div>
<div class="b" style="left:898.50px;top:313.30px;width:1.00px;height:25.50px;background:#dfe8ee;"></div>
<svg class="b" style="left:792px;top:333.5px" width="8" height="5"><path d="M0.6 0.5 H6.6 L3.6 3.6 Z" fill="#222"/></svg>
<div class="b" style="left:763.40px;top:351.50px;width:136.10px;height:13.30px;background:#eeeeee;"></div>
<div class="b" style="left:639.00px;top:351.50px;width:2.00px;height:13.30px;background:#eeeeee;"></div>
<div class="b" style="left:763.40px;top:375.90px;width:136.10px;height:13.30px;background:#eeeeee;"></div>
<div class="b" style="left:639.00px;top:375.90px;width:2.00px;height:13.30px;background:#eeeeee;"></div>
<div class="b" style="left:763.40px;top:409.00px;width:136.10px;height:13.70px;background:#eeeeee;"></div>
<div class="b" style="left:639.00px;top:409.00px;width:2.00px;height:13.70px;background:#eeeeee;"></div>
<div class="b" style="left:763.40px;top:444.00px;width:136.10px;height:42.60px;background:#eeeeee;"></div>
<div class="b" style="left:639.00px;top:444.00px;width:2.00px;height:42.60px;background:#eeeeee;"></div>
<div class="b" style="left:899.50px;top:313.30px;width:12.50px;height:185.70px;background:#f4f4f4;"></div>
<div class="b" style="left:903.20px;top:313.30px;width:8.60px;height:181.20px;background:#ededed;"></div>
<div class="b" style="left:904.00px;top:334.50px;width:7.00px;height:6.50px;background:#c8c8c8;"></div>
<svg class="b" style="left:903px;top:320px" width="9" height="6"><path d="M1.5 4.5 L4.3 1.5 L7.1 4.5" fill="none" stroke="#555" stroke-width="1"/></svg>
<svg class="b" style="left:903px;top:481px" width="9" height="6"><path d="M1.5 1.5 L4.3 4.5 L7.1 1.5" fill="none" stroke="#555" stroke-width="1"/></svg>
<div class="b" style="left:643.00px;top:499.60px;width:34.00px;height:1.60px;background:repeating-linear-gradient(90deg,#cfcfcf 0 3px,transparent 3px 6px);"></div>
<div class="b" style="left:14.00px;top:512.00px;width:36.00px;height:21.60px;background:#fff;"></div>
<div class="b" style="left:14.00px;top:511.80px;width:36.00px;height:1.80px;background:#6a9cb5;"></div>
<div class="b" style="left:50.85px;top:512.00px;width:36.00px;height:21.60px;background:#333;"></div>
<div class="b" style="left:50.85px;top:511.80px;width:36.00px;height:1.80px;background:#1f3b4a;"></div>
<div class="b" style="left:87.70px;top:512.00px;width:36.00px;height:21.60px;background:#fff;"></div>
<div class="b" style="left:87.70px;top:511.80px;width:36.00px;height:1.80px;background:#6a9cb5;"></div>
<div class="b" style="left:124.55px;top:512.00px;width:36.00px;height:21.60px;background:#fff;"></div>
<div class="b" style="left:124.55px;top:511.80px;width:36.00px;height:1.80px;background:#6a9cb5;"></div>
<div class="b" style="left:161.40px;top:512.00px;width:36.00px;height:21.60px;background:#fff;"></div>
<div class="b" style="left:161.40px;top:511.80px;width:36.00px;height:1.80px;background:#6a9cb5;"></div>
<div class="b" style="left:50.00px;top:513.30px;width:0.85px;height:20.30px;background:#e6e6e6;"></div>
<div class="b" style="left:86.85px;top:513.30px;width:0.85px;height:20.30px;background:#e6e6e6;"></div>
<div class="b" style="left:123.70px;top:513.30px;width:0.85px;height:20.30px;background:#e6e6e6;"></div>
<div class="b" style="left:160.55px;top:513.30px;width:0.85px;height:20.30px;background:#e6e6e6;"></div>
<div class="b" style="left:202.00px;top:513.40px;width:10.30px;height:18.00px;background:#fff;"></div>
<svg class="b" style="left:202px;top:513px" width="11" height="19"><path d="M2.3 2.8 L9 9.5 L2.3 16.2" fill="none" stroke="#666" stroke-width="1.1"/></svg>
<div class="b" style="left:234.00px;top:512.00px;width:50.60px;height:21.60px;background:#7a7a7a;"></div>
<div class="b" style="left:234.00px;top:512.00px;width:50.60px;height:1.30px;background:#5f7f8f;"></div>
<div class="b" style="left:286.30px;top:512.00px;width:51.60px;height:21.60px;background:#333;"></div>
<div class="b" style="left:286.30px;top:511.80px;width:51.60px;height:1.80px;background:#1f3b4a;"></div>
<div class="b" style="left:338.82px;top:512.00px;width:51.60px;height:21.60px;background:#fff;"></div>
<div class="b" style="left:338.82px;top:511.80px;width:51.60px;height:1.80px;background:#6a9cb5;"></div>
<div class="b" style="left:391.34px;top:512.00px;width:51.60px;height:21.60px;background:#fff;"></div>
<div class="b" style="left:391.34px;top:511.80px;width:51.60px;height:1.80px;background:#6a9cb5;"></div>
<div class="b" style="left:443.86px;top:512.00px;width:51.60px;height:21.60px;background:#fff;"></div>
<div class="b" style="left:443.86px;top:511.80px;width:51.60px;height:1.80px;background:#6a9cb5;"></div>
<div class="b" style="left:496.38px;top:512.00px;width:51.60px;height:21.60px;background:#fff;"></div>
<div class="b" style="left:496.38px;top:511.80px;width:51.60px;height:1.80px;background:#6a9cb5;"></div>
<div class="b" style="left:548.90px;top:512.00px;width:51.60px;height:21.60px;background:#fff;"></div>
<div class="b" style="left:548.90px;top:511.80px;width:51.60px;height:1.80px;background:#6a9cb5;"></div>
<div class="b" style="left:601.42px;top:512.00px;width:51.60px;height:21.60px;background:#fff;"></div>
<div class="b" style="left:601.42px;top:511.80px;width:51.60px;height:1.80px;background:#6a9cb5;"></div>
<div class="b" style="left:653.94px;top:512.00px;width:51.60px;height:21.60px;background:#fff;"></div>
<div class="b" style="left:653.94px;top:511.80px;width:51.60px;height:1.80px;background:#6a9cb5;"></div>
<div class="b" style="left:706.46px;top:512.00px;width:51.60px;height:21.60px;background:#fff;"></div>
<div class="b" style="left:706.46px;top:511.80px;width:51.60px;height:1.80px;background:#6a9cb5;"></div>
<div class="b" style="left:758.98px;top:512.00px;width:51.60px;height:21.60px;background:#fff;"></div>
<div class="b" style="left:758.98px;top:511.80px;width:51.60px;height:1.80px;background:#6a9cb5;"></div>
<div class="b" style="left:811.50px;top:512.00px;width:51.60px;height:21.60px;background:#fff;"></div>
<div class="b" style="left:811.50px;top:511.80px;width:51.60px;height:1.80px;background:#6a9cb5;"></div>
<div class="b" style="left:864.02px;top:512.00px;width:51.60px;height:21.60px;background:#fff;"></div>
<div class="b" style="left:864.02px;top:511.80px;width:51.60px;height:1.80px;background:#6a9cb5;"></div>
<div class="b" style="left:0.00px;top:537.70px;width:934.00px;height:31.30px;background:#e6e6e6;"></div>
<div class="b" style="left:13.50px;top:537.70px;width:1.00px;height:31.30px;background:#c8c8c8;"></div>
<div class="b" style="left:152.00px;top:537.70px;width:1.00px;height:31.30px;background:#c8c8c8;"></div>
<div class="b" style="left:280.50px;top:537.70px;width:1.00px;height:31.30px;background:#c8c8c8;"></div>
<div class="b" style="left:398.50px;top:537.70px;width:1.00px;height:31.30px;background:#c8c8c8;"></div>
<div class="b" style="left:467.50px;top:537.70px;width:1.00px;height:31.30px;background:#c8c8c8;"></div>
<div class="b" style="left:568.20px;top:537.70px;width:1.00px;height:31.30px;background:#c8c8c8;"></div>
<div class="b" style="left:680.90px;top:537.70px;width:1.00px;height:31.30px;background:#c8c8c8;"></div>
<div class="b" style="left:784.10px;top:537.70px;width:1.00px;height:31.30px;background:#c8c8c8;"></div>
<div class="b" style="left:153.00px;top:537.70px;width:128.00px;height:31.30px;background:#fff;"></div>
<div class="b" style="left:153.00px;top:567.00px;width:128.00px;height:2.00px;background:#f2c80f;"></div>
<svg class="b" style="left:0;top:0" width="934" height="569" font-family="Liberation Sans, sans-serif"><defs><clipPath id="mapclip"><rect x="145" y="99" width="346" height="187"/></clipPath></defs><text x="21.52" y="91.00" font-size="10.03" fill="#303030" textLength="59.91" lengthAdjust="spacingAndGlyphs">Empresa Grupo</text><text x="23.92" y="113.00" font-size="9.88" fill="#303030" textLength="11.84" lengthAdjust="spacingAndGlyphs">OT</text><text x="21.51" y="154.60" font-size="10.03" fill="#303030" textLength="13.26" lengthAdjust="spacingAndGlyphs">UN</text><text x="24.12" y="176.60" font-size="9.88" fill="#303030" textLength="59.01" lengthAdjust="spacingAndGlyphs">TRANSITARIO</text><text x="22.16" y="218.20" font-size="10.03" fill="#303030" textLength="12.45" lengthAdjust="spacingAndGlyphs">Via</text><text x="24.30" y="240.20" font-size="9.88" fill="#303030" textLength="10.85" lengthAdjust="spacingAndGlyphs">All</text><text x="21.50" y="281.80" font-size="10.03" fill="#303030" textLength="30.07" lengthAdjust="spacingAndGlyphs">Regime</text><text x="24.30" y="303.80" font-size="9.88" fill="#303030" textLength="10.85" lengthAdjust="spacingAndGlyphs">All</text><text x="21.76" y="345.40" font-size="10.03" fill="#303030" textLength="65.95" lengthAdjust="spacingAndGlyphs">Grupo Comercial</text><text x="24.30" y="367.40" font-size="9.88" fill="#303030" textLength="10.85" lengthAdjust="spacingAndGlyphs">All</text><text x="21.77" y="409.00" font-size="10.03" fill="#303030" textLength="66.79" lengthAdjust="spacingAndGlyphs">Gestor Comercial</text><text x="24.30" y="431.00" font-size="9.88" fill="#303030" textLength="10.85" lengthAdjust="spacingAndGlyphs">All</text><text x="21.50" y="472.60" font-size="10.03" fill="#303030" textLength="52.86" lengthAdjust="spacingAndGlyphs">Nome Cliente</text><text x="24.30" y="494.60" font-size="9.88" fill="#303030" textLength="10.85" lengthAdjust="spacingAndGlyphs">All</text><text x="182.57" y="26.40" font-size="10.61" fill="#1a5478" textLength="30.94" lengthAdjust="spacingAndGlyphs">Receita</text><text x="290.28" y="26.40" font-size="10.61" fill="#1a5478" textLength="37.46" lengthAdjust="spacingAndGlyphs">Margem</text><text x="392.00" y="26.40" font-size="10.61" fill="#1a5478" textLength="48.55" lengthAdjust="spacingAndGlyphs">Margem %</text><text x="506.53" y="26.40" font-size="10.61" fill="#1a5478" textLength="51.64" lengthAdjust="spacingAndGlyphs">Receita R/H</text><text x="613.64" y="26.40" font-size="10.61" fill="#1a5478" textLength="51.63" lengthAdjust="spacingAndGlyphs">Receita R-H</text><text x="726.59" y="26.40" font-size="10.61" fill="#1a5478" textLength="57.45" lengthAdjust="spacingAndGlyphs">Margem R/H</text><text x="834.00" y="26.40" font-size="10.61" fill="#1a5478" textLength="57.43" lengthAdjust="spacingAndGlyphs">Margem R-H</text><text x="144.26" y="93.80" font-size="9.59" fill="#969696" textLength="117.52" lengthAdjust="spacingAndGlyphs">MARGEM por PAÍS PROCESSO</text><text x="183.84" y="151.60" font-size="13.95" fill="#2b2b2b" textLength="47.06" lengthAdjust="spacingAndGlyphs" stroke="#ffffff" stroke-width="1.6" stroke-opacity="0.75" stroke-linejoin="round" paint-order="stroke">NORTH</text><text x="178.80" y="165.70" font-size="13.95" fill="#2b2b2b" textLength="57.12" lengthAdjust="spacingAndGlyphs" stroke="#ffffff" stroke-width="1.6" stroke-opacity="0.75" stroke-linejoin="round" paint-order="stroke">AMERICA</text><text x="312.66" y="159.50" font-size="13.95" fill="#2b2b2b" textLength="49.86" lengthAdjust="spacingAndGlyphs" stroke="#ffffff" stroke-width="1.6" stroke-opacity="0.75" stroke-linejoin="round" paint-order="stroke">EUROPE</text><text x="402.20" y="152.20" font-size="13.66" fill="#2b2b2b" textLength="27.25" lengthAdjust="spacingAndGlyphs" stroke="#ffffff" stroke-width="1.6" stroke-opacity="0.75" stroke-linejoin="round" paint-order="stroke">ASIA</text><text x="315.30" y="214.50" font-size="13.37" fill="#2b2b2b" textLength="44.03" lengthAdjust="spacingAndGlyphs" stroke="#ffffff" stroke-width="1.6" stroke-opacity="0.75" stroke-linejoin="round" paint-order="stroke">AFRICA</text><text x="236.03" y="234.80" font-size="13.37" fill="#2b2b2b" textLength="43.97" lengthAdjust="spacingAndGlyphs" stroke="#ffffff" stroke-width="1.6" stroke-opacity="0.75" stroke-linejoin="round" paint-order="stroke">SOUTH</text><text x="229.70" y="249.10" font-size="13.52" fill="#2b2b2b" textLength="57.02" lengthAdjust="spacingAndGlyphs" stroke="#ffffff" stroke-width="1.6" stroke-opacity="0.75" stroke-linejoin="round" paint-order="stroke">AMERICA</text><text x="429.70" y="244.90" font-size="13.37" fill="#2b2b2b" textLength="65.03" lengthAdjust="spacingAndGlyphs" clip-path="url(#mapclip)" stroke="#ffffff" stroke-width="1.6" stroke-opacity="0.75" stroke-linejoin="round" paint-order="stroke">AUSTRALIA</text><text x="249.05" y="183.70" font-size="8.72" fill="#4a69b0" font-style="italic" textLength="29.24" lengthAdjust="spacingAndGlyphs">Atlantic</text><text x="252.83" y="192.20" font-size="8.72" fill="#4a69b0" font-style="italic" textLength="24.96" lengthAdjust="spacingAndGlyphs">Ocean</text><text x="375.04" y="239.60" font-size="8.72" fill="#4a69b0" font-style="italic" textLength="24.25" lengthAdjust="spacingAndGlyphs">Indian</text><text x="375.53" y="249.00" font-size="8.72" fill="#4a69b0" font-style="italic" textLength="25.06" lengthAdjust="spacingAndGlyphs">Ocean</text><text x="319.70" y="281.80" font-size="7.56" fill="#333" textLength="131.45" lengthAdjust="spacingAndGlyphs">© 2019 HERE, © 2019 Microsoft Corporation</text><text x="455.07" y="281.80" font-size="7.56" fill="#3a5bb5" textLength="17.77" lengthAdjust="spacingAndGlyphs" text-decoration="underline">Terms</text><text x="159.39" y="278.00" font-size="11.63" fill="#222" textLength="20.29" lengthAdjust="spacingAndGlyphs">Bing</text><text x="507.45" y="93.10" font-size="9.74" fill="#969696" textLength="178.56" lengthAdjust="spacingAndGlyphs">MARGEM Real vs Homólogo | PAÍS PROCESSO</text><text x="516.23" y="110.90" font-size="8.28" fill="#6a6a6a" textLength="58.66" lengthAdjust="spacingAndGlyphs">%GT Margem (h)</text><text x="587.13" y="110.90" font-size="8.28" fill="#6a6a6a" textLength="47.26" lengthAdjust="spacingAndGlyphs">%GT Margem</text><text x="516.61" y="146.90" font-size="8.72" fill="#7a7a7a" textLength="25.90" lengthAdjust="spacingAndGlyphs">AFRICA</text><text x="526.43" y="172.90" font-size="8.72" fill="#7a7a7a" textLength="16.10" lengthAdjust="spacingAndGlyphs">ASIA</text><text x="510.32" y="198.90" font-size="8.72" fill="#7a7a7a" textLength="32.19" lengthAdjust="spacingAndGlyphs">AMERICA</text><text x="513.22" y="224.90" font-size="8.72" fill="#7a7a7a" textLength="29.31" lengthAdjust="spacingAndGlyphs">EUROPA</text><text x="510.71" y="250.90" font-size="8.72" fill="#7a7a7a" textLength="31.80" lengthAdjust="spacingAndGlyphs">OCEANIA</text><text x="717.54" y="93.10" font-size="9.74" fill="#969696" textLength="168.08" lengthAdjust="spacingAndGlyphs">MARGEM Real vs Homólogo | PAÍS CLIENTE</text><text x="726.33" y="110.90" font-size="8.28" fill="#6a6a6a" textLength="58.66" lengthAdjust="spacingAndGlyphs">%GT Margem (h)</text><text x="797.23" y="110.90" font-size="8.28" fill="#6a6a6a" textLength="47.26" lengthAdjust="spacingAndGlyphs">%GT Margem</text><text x="723.32" y="146.90" font-size="8.72" fill="#7a7a7a" textLength="29.31" lengthAdjust="spacingAndGlyphs">EUROPA</text><text x="720.42" y="172.90" font-size="8.72" fill="#7a7a7a" textLength="32.19" lengthAdjust="spacingAndGlyphs">AMERICA</text><text x="726.71" y="198.90" font-size="8.72" fill="#7a7a7a" textLength="25.90" lengthAdjust="spacingAndGlyphs">AFRICA</text><text x="736.53" y="224.90" font-size="8.72" fill="#7a7a7a" textLength="16.10" lengthAdjust="spacingAndGlyphs">ASIA</text><text x="720.81" y="250.90" font-size="8.72" fill="#7a7a7a" textLength="31.80" lengthAdjust="spacingAndGlyphs">OCEANIA</text><text x="868.32" y="152.00" font-size="8.87" fill="#fff" font-weight="bold" textLength="15.89" lengthAdjust="spacingAndGlyphs" stroke="#fff" stroke-width="0.25">92%</text><text x="145.16" y="308.20" font-size="9.59" fill="#969696" textLength="128.53" lengthAdjust="spacingAndGlyphs">FATURAÇÃO por PAÍS PROCESSO</text><text x="145.61" y="325.90" font-size="7.70" fill="#555" font-weight="bold" textLength="14.48" lengthAdjust="spacingAndGlyphs">Ano</text><text x="174.32" y="325.90" font-size="8.58" fill="#6a6a6a" textLength="17.09" lengthAdjust="spacingAndGlyphs">2015</text><text x="203.25" y="325.90" font-size="8.58" fill="#6a6a6a" textLength="17.09" lengthAdjust="spacingAndGlyphs">2016</text><text x="232.17" y="325.90" font-size="8.58" fill="#6a6a6a" textLength="17.17" lengthAdjust="spacingAndGlyphs">2017</text><text x="261.11" y="325.90" font-size="8.58" fill="#6a6a6a" textLength="17.09" lengthAdjust="spacingAndGlyphs">2018</text><text x="290.04" y="325.90" font-size="8.58" fill="#6a6a6a" textLength="17.13" lengthAdjust="spacingAndGlyphs">2019</text><text x="189.00" y="499.20" font-size="8.72" fill="#7a7a7a" textLength="26.32" lengthAdjust="spacingAndGlyphs">AFRICA</text><text x="232.40" y="499.20" font-size="8.72" fill="#7a7a7a" textLength="16.23" lengthAdjust="spacingAndGlyphs">ASIA</text><text x="262.50" y="499.20" font-size="8.72" fill="#7a7a7a" textLength="33.31" lengthAdjust="spacingAndGlyphs">AMERICA</text><text x="302.43" y="499.20" font-size="8.72" fill="#7a7a7a" textLength="29.80" lengthAdjust="spacingAndGlyphs">EUROPA</text><text x="339.27" y="499.20" font-size="8.72" fill="#7a7a7a" textLength="33.44" lengthAdjust="spacingAndGlyphs">OCEANIA</text><text x="204.88" y="396.70" font-size="7.27" fill="#8a8a8a" textLength="7.46" lengthAdjust="spacingAndGlyphs">M</text><text x="203.54" y="459.00" font-size="7.27" fill="#8a8a8a" textLength="9.16" lengthAdjust="spacingAndGlyphs">0.1</text><text x="223.97" y="438.00" font-size="7.27" fill="#8a8a8a" textLength="8.07" lengthAdjust="spacingAndGlyphs">0.5</text><text x="236.91" y="431.00" font-size="7.27" fill="#8a8a8a" textLength="5.96" lengthAdjust="spacingAndGlyphs">0.</text><text x="236.48" y="438.00" font-size="7.27" fill="#8a8a8a" textLength="7.46" lengthAdjust="spacingAndGlyphs">M</text><text x="263.36" y="466.00" font-size="7.27" fill="#8a8a8a" textLength="5.00" lengthAdjust="spacingAndGlyphs">0.</text><text x="308.58" y="457.60" font-size="4.36" fill="#8a8a8a" textLength="6.47" lengthAdjust="spacingAndGlyphs">M</text><text x="399.07" y="308.20" font-size="9.59" fill="#969696" textLength="163.30" lengthAdjust="spacingAndGlyphs">FATURAÇÃO e MARGEM | PAÍS PROCESSO</text><text x="403.44" y="321.90" font-size="7.70" fill="#666" textLength="13.71" lengthAdjust="spacingAndGlyphs">Pais</text><text x="478.32" y="322.20" font-size="7.99" fill="#666" textLength="24.69" lengthAdjust="spacingAndGlyphs">Receita</text><text x="527.25" y="322.20" font-size="7.99" fill="#666" textLength="29.76" lengthAdjust="spacingAndGlyphs">Margem</text><text x="527.60" y="331.90" font-size="7.99" fill="#666" textLength="21.50" lengthAdjust="spacingAndGlyphs">Fatura</text><text x="575.54" y="322.20" font-size="7.99" fill="#666" textLength="30.28" lengthAdjust="spacingAndGlyphs">Margem</text><text x="575.59" y="331.90" font-size="7.99" fill="#666" textLength="30.75" lengthAdjust="spacingAndGlyphs">Fatura %</text><text x="404.00" y="348.70" font-size="7.70" fill="#666" textLength="24.09" lengthAdjust="spacingAndGlyphs">Angola</text><text x="403.61" y="360.88" font-size="7.70" fill="#666" textLength="20.13" lengthAdjust="spacingAndGlyphs">China</text><text x="403.38" y="373.06" font-size="7.70" fill="#666" textLength="28.69" lengthAdjust="spacingAndGlyphs">Portugal</text><text x="403.38" y="385.24" font-size="7.70" fill="#666" textLength="19.26" lengthAdjust="spacingAndGlyphs">Brasil</text><text x="403.38" y="397.42" font-size="7.70" fill="#666" textLength="53.96" lengthAdjust="spacingAndGlyphs">Estados Unidos</text><text x="403.38" y="409.60" font-size="7.70" fill="#666" textLength="40.69" lengthAdjust="spacingAndGlyphs">Bangladesh</text><text x="403.38" y="421.78" font-size="7.70" fill="#666" textLength="24.40" lengthAdjust="spacingAndGlyphs">Mexico</text><text x="403.31" y="433.96" font-size="7.70" fill="#666" textLength="16.71" lengthAdjust="spacingAndGlyphs">India</text><text x="403.64" y="446.14" font-size="7.70" fill="#666" textLength="25.49" lengthAdjust="spacingAndGlyphs">Canada</text><text x="403.88" y="458.32" font-size="7.70" fill="#666" textLength="20.99" lengthAdjust="spacingAndGlyphs">Japao</text><text x="403.61" y="470.50" font-size="7.70" fill="#666" textLength="55.64" lengthAdjust="spacingAndGlyphs">Coreia do Norte</text><text x="404.00" y="482.68" font-size="7.70" fill="#666" textLength="29.97" lengthAdjust="spacingAndGlyphs">Australia</text><text x="404.00" y="494.86" font-size="7.70" fill="#666" textLength="43.53" lengthAdjust="spacingAndGlyphs">Africa do Sul</text><text x="639.06" y="308.20" font-size="9.59" fill="#969696" textLength="133.19" lengthAdjust="spacingAndGlyphs">FATURAÇÃO e MARGEM | CLIENTE</text><text x="642.18" y="322.00" font-size="7.99" fill="#666" textLength="53.73" lengthAdjust="spacingAndGlyphs">Nome Empresa</text><text x="744.11" y="322.00" font-size="7.99" fill="#666" textLength="24.89" lengthAdjust="spacingAndGlyphs">Receita</text><text x="791.75" y="322.00" font-size="7.99" fill="#666" textLength="29.76" lengthAdjust="spacingAndGlyphs">Margem</text><text x="792.10" y="331.70" font-size="7.99" fill="#666" textLength="21.50" lengthAdjust="spacingAndGlyphs">Fatura</text><text x="847.84" y="322.00" font-size="7.99" fill="#666" textLength="30.28" lengthAdjust="spacingAndGlyphs">Margem</text><text x="847.89" y="331.70" font-size="7.99" fill="#666" textLength="30.75" lengthAdjust="spacingAndGlyphs">Fatura %</text><text x="21.22" y="525.90" font-size="10.17" fill="#333333" textLength="21.50" lengthAdjust="spacingAndGlyphs">2019</text><text x="58.05" y="525.90" font-size="10.17" fill="#fff" textLength="21.50" lengthAdjust="spacingAndGlyphs">2018</text><text x="94.95" y="525.90" font-size="10.17" fill="#333333" textLength="21.50" lengthAdjust="spacingAndGlyphs">2017</text><text x="131.75" y="525.90" font-size="10.17" fill="#333333" textLength="21.50" lengthAdjust="spacingAndGlyphs">2016</text><text x="168.60" y="525.90" font-size="10.17" fill="#333333" textLength="21.50" lengthAdjust="spacingAndGlyphs">2015</text><text x="241.41" y="526.80" font-size="10.17" fill="#fff" textLength="35.99" lengthAdjust="spacingAndGlyphs">Select All</text><text x="305.12" y="526.80" font-size="10.17" fill="#fff" textLength="14.44" lengthAdjust="spacingAndGlyphs">Jan</text><text x="356.83" y="526.80" font-size="10.17" fill="#333333" textLength="14.93" lengthAdjust="spacingAndGlyphs">Fev</text><text x="409.15" y="526.80" font-size="10.17" fill="#333333" textLength="15.42" lengthAdjust="spacingAndGlyphs">Mar</text><text x="462.77" y="526.80" font-size="10.17" fill="#333333" textLength="13.93" lengthAdjust="spacingAndGlyphs">Abr</text><text x="514.91" y="526.80" font-size="10.17" fill="#333333" textLength="14.43" lengthAdjust="spacingAndGlyphs">Mai</text><text x="567.72" y="526.80" font-size="10.17" fill="#333333" textLength="14.44" lengthAdjust="spacingAndGlyphs">Jun</text><text x="621.74" y="526.80" font-size="10.17" fill="#333333" textLength="11.45" lengthAdjust="spacingAndGlyphs">Jul</text><text x="671.95" y="526.80" font-size="10.17" fill="#333333" textLength="15.93" lengthAdjust="spacingAndGlyphs">Ago</text><text x="725.37" y="526.80" font-size="10.17" fill="#333333" textLength="13.44" lengthAdjust="spacingAndGlyphs">Set</text><text x="777.39" y="526.80" font-size="10.17" fill="#333333" textLength="14.43" lengthAdjust="spacingAndGlyphs">Out</text><text x="829.00" y="526.80" font-size="10.17" fill="#333333" textLength="15.92" lengthAdjust="spacingAndGlyphs">Nov</text><text x="881.72" y="526.80" font-size="10.17" fill="#333333" textLength="15.92" lengthAdjust="spacingAndGlyphs">Dez</text><text x="32.84" y="559.10" font-size="12.21" fill="#3b3b3b" textLength="103.20" lengthAdjust="spacingAndGlyphs">Controlo Orçamental</text><text x="172.60" y="559.10" font-size="12.21" fill="#3b3b3b" textLength="90.79" lengthAdjust="spacingAndGlyphs">Análise Geográfica</text><text x="300.16" y="559.10" font-size="12.21" fill="#3b3b3b" textLength="80.80" lengthAdjust="spacingAndGlyphs">Carteira Clientes</text><text x="417.85" y="559.10" font-size="12.21" fill="#3b3b3b" textLength="31.25" lengthAdjust="spacingAndGlyphs">Visitas</text><text x="485.24" y="559.10" font-size="12.21" fill="#3b3b3b" textLength="66.23" lengthAdjust="spacingAndGlyphs">Propostas Kis</text><text x="587.45" y="559.10" font-size="12.21" fill="#3b3b3b" textLength="77.05" lengthAdjust="spacingAndGlyphs">Propostas Excel</text><text x="700.09" y="559.10" font-size="12.21" fill="#3b3b3b" textLength="67.95" lengthAdjust="spacingAndGlyphs">Portal Cliente</text></svg>
</body></html>
